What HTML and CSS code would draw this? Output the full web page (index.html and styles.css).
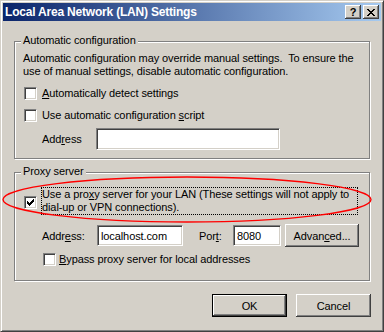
FILE: index.html
```html
<!DOCTYPE html>
<html lang="en">

<head>
    <meta charset="UTF-8">
    <title>Local Area Network (LAN) Settings</title>
    <link rel="stylesheet" href="styles.css">
</head>

<body>
    <div class="window">
        <div class="titlebar">
            <span class="title">Local Area Network (LAN) Settings</span>
            <div class="caption-buttons">
                <span class="caption-btn help">?</span>
                <span class="caption-btn close">
                    <svg width="8" height="7" viewBox="0 0 8 7">
                        <path d="M0 0h2v1H0z M6 0h2v1H6z M1 1h2v1H1z M5 1h2v1H5z M2 2h4v1H2z M3 3h2v1H3z M2 4h4v1H2z M1 5h2v1H1z M5 5h2v1H5z M0 6h2v1H0z M6 6h2v1H6z" fill="#000"/>
                    </svg>
                </span>
            </div>
        </div>

        <div class="content">
            <div class="group group-auto">
                <span class="group-title">Automatic configuration</span>
                <p class="desc">Automatic configuration may override manual settings.&nbsp; To ensure the<br>use of manual settings, disable automatic configuration.</p>
                <div class="check-row row-detect">
                    <span class="checkbox"></span>
                    <span class="check-label"><u>A</u>utomatically detect settings</span>
                </div>
                <div class="check-row row-script">
                    <span class="checkbox"></span>
                    <span class="check-label">Use automatic configuration <u>s</u>cript</span>
                </div>
                <div class="field-row row-auto-address">
                    <span class="field-label">Add<u>r</u>ess</span>
                    <input class="textbox textbox-wide" type="text" value="" readonly>
                </div>
            </div>

            <div class="group group-proxy">
                <span class="group-title">Proxy server</span>
                <div class="check-row row-proxy">
                    <span class="checkbox">
                        <svg width="7" height="7" viewBox="0 0 7 7">
                            <path d="M6 0h1v1H6z M5 1h2v1H5z M0 2h1v1H0z M4 2h3v1H4z M0 3h2v1H0z M3 3h3v1H3z M0 4h5v1H0z M1 5h3v1H1z M2 6h1v1H2z" fill="#000"/>
                        </svg>
                    </span>
                    <span class="check-label focused">Use a pro<u>x</u>y server for your LAN (These settings will not apply to<br>dial-up or VPN connections).</span>
                </div>
                <div class="field-row row-proxy-address">
                    <span class="field-label">Addr<u>e</u>ss:</span>
                    <input class="textbox textbox-host" type="text" value="localhost.com" readonly>
                    <span class="field-label label-port">Por<u>t</u>:</span>
                    <input class="textbox textbox-port" type="text" value="8080" readonly>
                    <button class="push-btn btn-advanced">Advan<u>c</u>ed...</button>
                </div>
                <div class="check-row row-bypass">
                    <span class="checkbox"></span>
                    <span class="check-label"><u>B</u>ypass proxy server for local addresses</span>
                </div>
            </div>

            <div class="dialog-buttons">
                <button class="push-btn btn-default">OK</button>
                <button class="push-btn">Cancel</button>
            </div>
        </div>

        <!-- red ring drawn over the proxy option -->
        <svg class="annotation" width="384" height="332" viewBox="0 0 384 332">
            <ellipse cx="187" cy="199.5" rx="184" ry="22.5" fill="none" stroke="#ff0000" stroke-width="1.4"/>
        </svg>
    </div>
</body>

</html>
```

FILE: styles.css
```css
* {
    box-sizing: border-box;
}

body {
    margin: 0;
    background: #d4d0c8;
    font-family: "Liberation Sans", Arial, sans-serif;
    font-size: 11px;
    letter-spacing: -0.1px;
    color: #000000;
}

.window {
    position: relative;
    width: 384px;
    height: 332px;
    display: flex;
    flex-direction: column;
    padding: 2px;
    background: #d4d0c8;
    border: 1px solid;
    border-color: #d4d0c8 #404040 #404040 #d4d0c8;
    box-shadow: inset 1px 1px #ffffff, inset -1px -1px #808080;
}

.titlebar {
    flex: none;
    height: 18px;
    display: flex;
    align-items: center;
    justify-content: space-between;
    padding: 0 2px;
    background: linear-gradient(90deg, #0a246a, #a6caf0);
    color: #ffffff;
    font-weight: bold;
}

.title {
    font-size: 12px;
    letter-spacing: -0.2px;
}

.caption-buttons {
    display: flex;
    gap: 2px;
}

.caption-btn {
    width: 16px;
    height: 14px;
    display: flex;
    align-items: center;
    justify-content: center;
    background: #d4d0c8;
    box-shadow: inset -1px -1px #404040, inset 1px 1px #ffffff, inset -2px -2px #808080;
    color: #000000;
    font-weight: bold;
}

.caption-btn svg {
    display: block;
}

.content {
    flex: 1;
    display: flex;
    flex-direction: column;
    padding: 20px 11px 0;
}

.group {
    display: flex;
    flex-direction: column;
    align-items: flex-start;
    padding: 0 8px 8px;
    border: 1px solid #808080;
    box-shadow: inset 1px 1px #ffffff, 1px 1px #ffffff;
}

.group-title {
    margin: -8px 0 0 -2px;
    padding: 0 2px;
    line-height: 13px;
    background: #d4d0c8;
}

.group-proxy {
    margin-top: 13px;
    padding-bottom: 14px;
}

.desc {
    margin: 5px 0 0;
    line-height: 13px;
    white-space: nowrap;
}

.check-row {
    display: flex;
    align-items: center;
    gap: 5px;
    line-height: 13px;
    white-space: nowrap;
}

.checkbox {
    flex: none;
    width: 13px;
    height: 13px;
    margin-left: 1px;
    padding: 2px;
    background: #ffffff;
    border: 1px solid;
    border-color: #808080 #ffffff #ffffff #808080;
    box-shadow: inset 1px 1px #404040, inset -1px -1px #d4d0c8;
}

.checkbox svg {
    display: block;
}

.row-detect,
.row-script {
    margin-top: 9px;
}

.row-proxy {
    margin-top: 9px;
    gap: 4px;
}

.row-proxy .checkbox {
    margin-top: 3px;
}

.focused {
    width: 317px;
    border: 1px dotted #000000;
}

.row-bypass {
    margin-top: 6px;
    gap: 3px;
}

.row-bypass .checkbox {
    margin-left: 20px;
}

.field-row {
    display: flex;
    align-items: center;
    padding-left: 19px;
    white-space: nowrap;
}

.row-auto-address {
    margin-top: 6px;
}

.row-proxy-address {
    margin-top: 9px;
}

.field-label {
    width: 54px;
}

.row-proxy-address .field-label {
    width: 55px;
}

.row-proxy-address .label-port {
    width: 34px;
    margin-left: 16px;
}

.textbox {
    height: 21px;
    padding: 0 3px;
    font: inherit;
    letter-spacing: inherit;
    color: #000000;
    background: #ffffff;
    border: 1px solid;
    border-color: #808080 #ffffff #ffffff #808080;
    box-shadow: inset 1px 1px #404040, inset -1px -1px #d4d0c8;
    outline: none;
}

.textbox-wide {
    width: 184px;
    height: 22px;
}

.textbox-host {
    width: 86px;
}

.textbox-port {
    width: 48px;
}

.push-btn {
    width: 75px;
    height: 23px;
    padding: 0;
    font: inherit;
    letter-spacing: inherit;
    color: #000000;
    background: #d4d0c8;
    border: none;
    box-shadow: inset -1px -1px #404040, inset 1px 1px #ffffff, inset -2px -2px #808080;
}

.btn-advanced {
    width: 74px;
    margin-left: 4px;
}

.btn-default {
    border: 1px solid #000000;
}

.dialog-buttons {
    display: flex;
    justify-content: flex-end;
    gap: 9px;
    margin: 13px -1px 0 0;
}

.annotation {
    position: absolute;
    top: -1px;
    left: -1px;
    pointer-events: none;
}
```
